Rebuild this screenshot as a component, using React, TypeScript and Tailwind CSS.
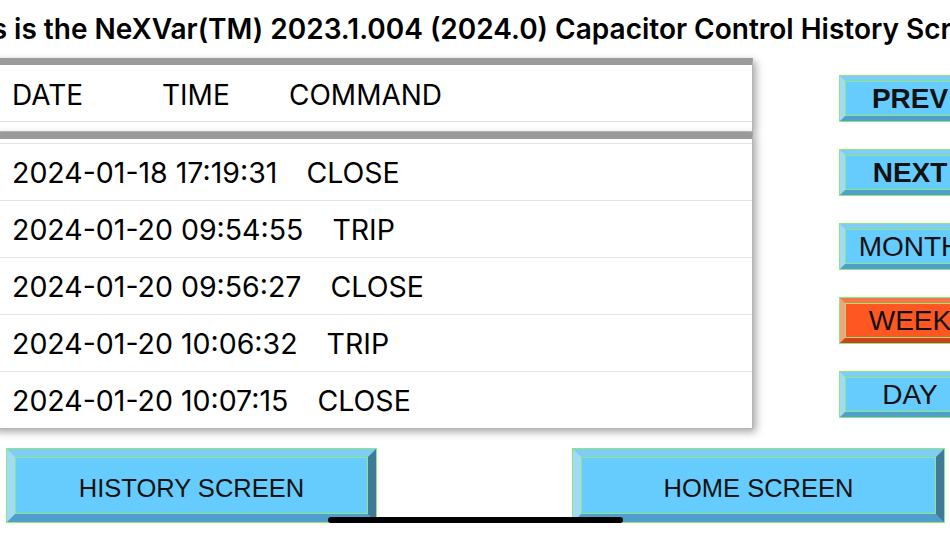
import React from 'react';

const rows = [
  { stamp: '2024-01-18 17:19:31', cmd: 'CLOSE' },
  { stamp: '2024-01-20 09:54:55', cmd: 'TRIP' },
  { stamp: '2024-01-20 09:56:27', cmd: 'CLOSE' },
  { stamp: '2024-01-20 10:06:32', cmd: 'TRIP' },
  { stamp: '2024-01-20 10:07:15', cmd: 'CLOSE' },
];

const sideButtons = [
  { label: 'PREV', bold: true, active: false },
  { label: 'NEXT', bold: true, active: false },
  { label: 'MONTH', bold: false, active: false },
  { label: 'WEEK', bold: false, active: true },
  { label: 'DAY', bold: false, active: false },
];

function SideButton({ label, bold, active }: { label: string; bold: boolean; active: boolean }) {
  return (
    <div className="w-[142px] h-[47px] border border-[#8ee67e] shrink-0">
      {active ? (
        <div className="h-full border-[5px] border-t-[#ee7a4c] border-l-[#f2a47c] border-b-[#c8441c] border-r-[#9c3414]">
          <div className="h-full border border-[#a8e070] bg-[#ff5722] flex items-center justify-center">
            <span className="text-[28px] text-[#111] font-['Liberation_Sans',Arial,sans-serif]">{label}</span>
          </div>
        </div>
      ) : (
        <div className="h-full border-[5px] border-t-[#80cdf3] border-l-[#a2dbf6] border-b-[#4f9fca] border-r-[#3f7b97]">
          <div className="h-full border border-[#8ee67e] bg-[#66cbfd] flex items-center justify-center">
            <span
              className={
                bold
                  ? "text-[28px] font-bold text-[#111] font-['Liberation_Sans',Arial,sans-serif]"
                  : "text-[28px] text-[#111] font-['Liberation_Sans',Arial,sans-serif]"
              }
            >
              {label}
            </span>
          </div>
        </div>
      )}
    </div>
  );
}

function BigButton({ label }: { label: string }) {
  return (
    <div className="h-[75px] w-full border border-[#8ee67e]">
      <div className="h-full border-[8px] border-t-[#80cdf3] border-l-[#a2dbf6] border-b-[#4f9fca] border-r-[#3f7b97]">
        <div className="h-full border border-[#8ee67e] bg-[#66cbfd] flex items-center justify-center pt-[6px]">
          <span className="text-[25.5px] text-[#111] font-['Liberation_Sans',Arial,sans-serif]">{label}</span>
        </div>
      </div>
    </div>
  );
}

export default function App() {
  return (
    <div className="w-[950px] h-[534px] overflow-hidden relative bg-white font-['Inter','Noto_Sans',sans-serif] text-black">
      <div className="h-[58px] flex items-center justify-center overflow-hidden">
        <h1 className="whitespace-nowrap text-[28px] font-semibold">
          This is the NeXVar(TM) 2023.1.004 (2024.0) Capacitor Control History Screen
        </h1>
      </div>

      <div className="flex">
        <div className="ml-[-8px] w-[761px] shrink-0">
          <div className="bg-white border-t-[7px] border-t-[#9b9b9b] border-r border-r-[#b5b5b5] shadow-[3px_3px_8px_rgba(0,0,0,0.35)]">
            <div className="h-[57px] flex items-center pl-[20px] pt-[3px] text-[28px] border-b border-[#e0e0e0]">
              <span className="w-[150px]">DATE</span>
              <span className="w-[127px]">TIME</span>
              <span>COMMAND</span>
            </div>
            <div className="h-[9px]" />
          </div>

          <div className="mt-px bg-white border-t-[7px] border-t-[#9b9b9b] border-r border-r-[#b5b5b5] border-b border-b-[#b5b5b5] shadow-[3px_3px_8px_rgba(0,0,0,0.35)]">
            <div className="h-[4px] border-b border-[#e4e4e4] box-content" />
            {rows.map((r, i) => (
              <div
                key={i}
                className={
                  i < rows.length - 1
                    ? 'h-[57px] flex items-center pl-[20px] pt-[2px] text-[28.5px] border-b border-[#e4e4e4]'
                    : 'h-[56px] flex items-center pl-[20px] pt-[2px] text-[28.5px]'
                }
              >
                <span className="whitespace-pre">{r.stamp}</span>
                <span className="ml-[29px]">{r.cmd}</span>
              </div>
            ))}
          </div>
        </div>

        <div className="ml-[86px] pt-[17px] flex flex-col gap-[27px]">
          {sideButtons.map((b) => (
            <SideButton key={b.label} label={b.label} bold={b.bold} active={b.active} />
          ))}
        </div>
      </div>

      <div className="flex mt-[19px]">
        <div className="ml-[6px] w-[371px]">
          <BigButton label="HISTORY SCREEN" />
        </div>
        <div className="ml-[195px] w-[373px]">
          <BigButton label="HOME SCREEN" />
        </div>
      </div>

      <div className="absolute left-[328px] top-[517px] w-[295px] h-[6px] rounded-full bg-black" />
    </div>
  );
}
